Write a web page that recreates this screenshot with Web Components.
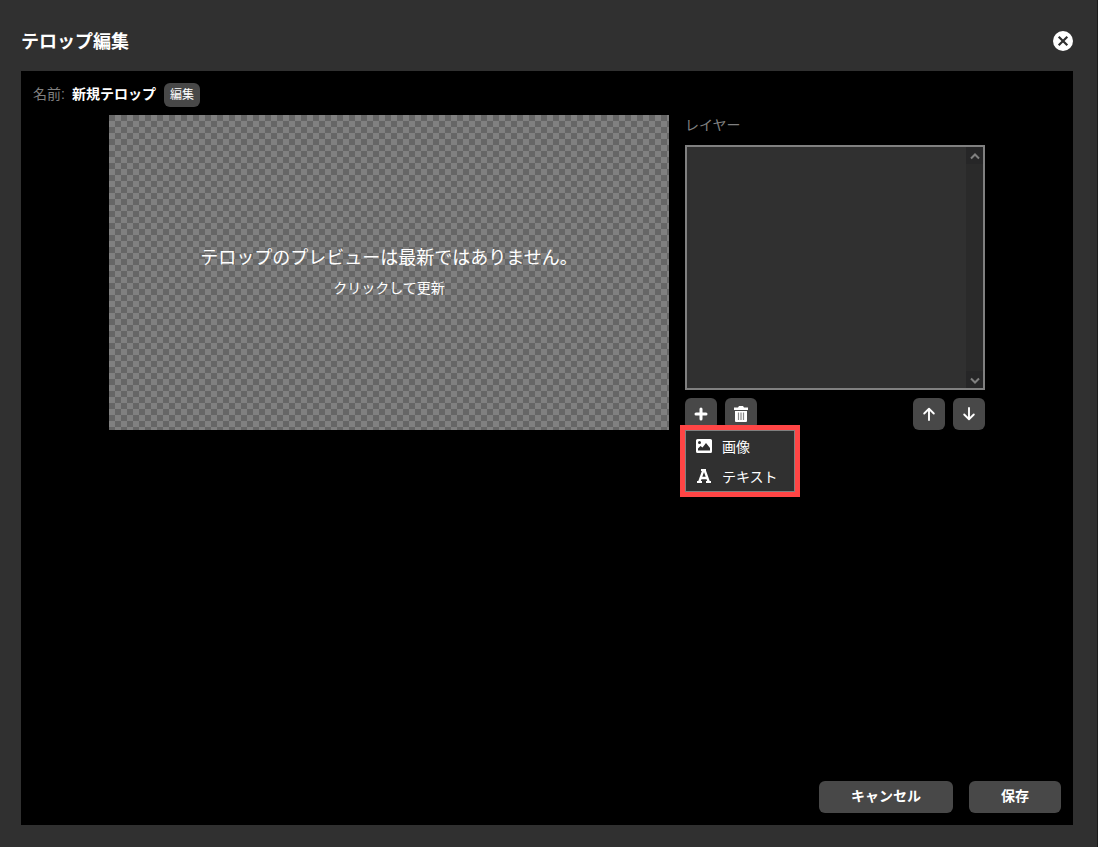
<!DOCTYPE html>
<html lang="ja">
<head>
<meta charset="utf-8">
<title>テロップ編集</title>
<style>
html, body { margin: 0; background: #303030; }
body { font-family: "Liberation Sans", "Noto Sans CJK JP", sans-serif; font-size: 14px; line-height: 20px; color: #fff; }
</style>
</head>
<body>
<telop-dialog heading="テロップ編集">
  <telop-name slot="body" value="新規テロップ"></telop-name>
  <telop-workspace slot="body">
    <telop-preview></telop-preview>
    <telop-layers></telop-layers>
  </telop-workspace>
  <push-button slot="actions">キャンセル</push-button>
  <push-button slot="actions">保存</push-button>
</telop-dialog>
<script>
const define = (name, html, setup) => {
  const template = document.createElement('template');
  template.innerHTML = html;
  customElements.define(name, class extends HTMLElement {
    constructor() {
      super();
      this.attachShadow({ mode: 'open' }).append(template.content.cloneNode(true));
    }
    connectedCallback() { if (setup) setup(this, this.shadowRoot); }
  });
};

const icons = {
  close: '<circle cx="10" cy="10" r="10" fill="#fff"/><path d="M5.700 5.700l8.600 8.600M14.300 5.700l-8.600 8.600" stroke="#303030" stroke-width="2.200" fill="none"/>',
  plus: '<path d="M10 5v10M5 10h10" stroke="#fff" stroke-width="3" stroke-linecap="round" fill="none"/>',
  trash: '<path fill="#fff" d="M3 3.500h4l1-1.500h4l1 1.500h4V6H3zM4 7h12v10a1 1 0 0 1-1 1H5a1 1 0 0 1-1-1z"/><path d="M7.500 8.500v7.500M10 8.500v7.500M12.500 8.500v7.500" stroke="#888" stroke-width="1.200"/>',
  up: '<path d="M10 16V5M5.200 9.500L10 4.800l4.800 4.700" stroke="#fff" stroke-width="1.900" stroke-linecap="round" stroke-linejoin="round" fill="none"/>',
  down: '<path d="M10 4v11M5.200 10.500L10 15.200l4.800-4.700" stroke="#fff" stroke-width="1.900" stroke-linecap="round" stroke-linejoin="round" fill="none"/>',
  image: '<path fill="#fff" fill-rule="evenodd" d="M3.500 3h13A1.500 1.500 0 0 1 18 4.500v11a1.500 1.500 0 0 1-1.500 1.500h-13A1.500 1.500 0 0 1 2 15.500v-11A1.500 1.500 0 0 1 3.500 3zM4 14.500h12v-2.500L12 7 8.500 11.500 6.500 10 4 12.500zM5.500 5a1.500 1.500 0 1 0 0 3 1.500 1.500 0 0 0 0-3z"/>',
  text: '<path d="M5.200 16L9.300 4.500h1.400L14.800 16M6.500 12h7" stroke="#fff" stroke-width="2.300" fill="none"/><path d="M3 16h5M12 16h5M7 4h5" stroke="#fff" stroke-width="1.800"/>',
  chevup: '<path d="M5 11.500l4-4 4 4" stroke="#808080" stroke-width="2" fill="none"/>',
  chevdown: '<path d="M5 7.500l4 4 4-4" stroke="#808080" stroke-width="2" fill="none"/>'
};

define('ui-icon', `
<style>:host { display: block; width: 20px; height: 20px; } svg { display: block; }</style>
<svg width="20" height="20" viewBox="0 0 20 20" aria-hidden="true"></svg>`,
(host, root) => { root.querySelector('svg').innerHTML = icons[host.getAttribute('name')] || ''; });

define('icon-button', `
<style>
:host { display: block; }
button { display: grid; place-items: center; width: 32px; height: 32px; padding: 0; border: 0; border-radius: 6px; background: #484848; }
</style>
<button type="button"></button>`,
(host, root) => {
  const button = root.querySelector('button');
  button.setAttribute('aria-label', host.getAttribute('label'));
  button.innerHTML = `<ui-icon name="${host.getAttribute('icon')}"></ui-icon>`;
});

define('push-button', `
<style>
:host { display: block; }
button { display: block; height: 32px; padding: 0 32px 2px; border: 0; border-radius: 6px; background: #484848; color: #fff; font: inherit; font-weight: bold; }
:host([small]) button { height: 24px; padding: 0 6px; font-size: 12px; font-weight: normal; }
</style>
<button type="button"><slot></slot></button>`);

define('telop-name', `
<style>
:host { display: flex; align-items: center; height: 24px; gap: 8px; }
.label { color: #808080; }
.field { display: flex; gap: 7px; padding-bottom: 2px; }
</style>
<div class="field"><span class="label">名前:</span><strong></strong></div>
<push-button small>編集</push-button>`,
(host, root) => { root.querySelector('strong').textContent = host.getAttribute('value'); });

define('telop-workspace', `
<style>:host { display: flex; justify-content: center; gap: 16px; margin-top: 8px; }</style>
<slot></slot>`);

define('telop-preview', `
<style>
:host { display: block; flex: 0 1 560px; }
button { display: flex; flex-direction: column; align-items: center; justify-content: center; gap: 6px; box-sizing: border-box; width: 100%; aspect-ratio: 16 / 9; padding: 0 0 4px; border: 0; color: #fff; font: inherit;
  background: repeating-conic-gradient(#808080 0 25%, #666 0 50%) 0 0 / 12px 12px; }
.message { font-size: 18px; line-height: 28px; }
</style>
<button type="button"><span class="message">テロップのプレビューは最新ではありません。</span><span>クリックして更新</span></button>`);

define('layer-menu', `
<style>
:host { display: block; width: 108px; border: 1px solid #808080; outline: 5px solid #ff4545; background: #303030; }
button { display: flex; align-items: center; gap: 8px; width: 100%; height: 30px; padding: 0 8px; border: 0; background: none; color: #fff; font: inherit; }
span { padding-top: 2px; }
</style>
<div role="menu">
  <button type="button" role="menuitem"><ui-icon name="image"></ui-icon><span>画像</span></button>
  <button type="button" role="menuitem"><ui-icon name="text"></ui-icon><span>テキスト</span></button>
</div>`);

define('telop-layers', `
<style>
:host { display: flex; flex-direction: column; flex: 0 0 300px; }
.label { height: 30px; color: #808080; }
.list { display: flex; justify-content: flex-end; flex: 1; border: 2px solid #808080; background: #303030; }
.scroll { display: flex; flex-direction: column; justify-content: space-between; width: 17px; background: #2a2a2a; }
.scroll div { height: 17px; overflow: hidden; background: #262627; }
.tools { display: flex; gap: 8px; margin-top: 8px; }
.add { position: relative; }
.add layer-menu { position: absolute; top: 100%; left: 0; }
.space { flex: 1; }
</style>
<div class="label" id="layers">レイヤー</div>
<div class="list" role="listbox" aria-labelledby="layers">
  <div class="scroll" aria-hidden="true"><div><ui-icon name="chevup"></ui-icon></div><div><ui-icon name="chevdown"></ui-icon></div></div>
</div>
<div class="tools">
  <div class="add"><icon-button icon="plus" label="追加"></icon-button><layer-menu></layer-menu></div>
  <icon-button icon="trash" label="削除"></icon-button>
  <div class="space"></div>
  <icon-button icon="up" label="上へ"></icon-button>
  <icon-button icon="down" label="下へ"></icon-button>
</div>`);

define('telop-dialog', `
<style>
:host { display: flex; flex-direction: column; box-sizing: border-box; min-height: 100vh; padding: 0 24px 22px 21px; border-right: 1px solid #1c1c1c; background: #303030; }
header { display: flex; align-items: center; justify-content: space-between; height: 71px; box-sizing: border-box; padding-top: 11px; }
h1 { margin: 0; padding-top: 2px; font-size: 18px; line-height: 28px; }
.close { padding: 0; border: 0; background: none; }
main { display: flex; flex-direction: column; flex: 1; padding: 12px; background: #000; }
footer { display: flex; justify-content: flex-end; gap: 16px; margin-top: auto; }
</style>
<header><h1></h1><button class="close" type="button" aria-label="閉じる"><ui-icon name="close"></ui-icon></button></header>
<main><slot name="body"></slot><footer><slot name="actions"></slot></footer></main>`,
(host, root) => { root.querySelector('h1').textContent = host.getAttribute('heading'); });
</script>
</body>
</html>
